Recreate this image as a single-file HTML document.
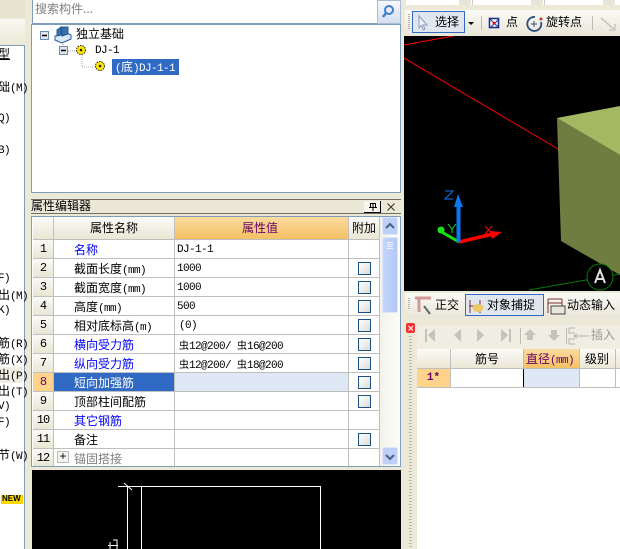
<!DOCTYPE html>
<html><head><meta charset="utf-8"><style>
html,body{margin:0;padding:0}
body{width:620px;height:549px;overflow:hidden;position:relative;background:#ece9d8;font:12px/14px "WenQuanYi Zen Hei","Noto Sans CJK SC",sans-serif;color:#000}
div,span.a{position:absolute;box-sizing:border-box}
.t{position:absolute;white-space:nowrap;line-height:14px;font-size:12px}
.m{font:11px/14px "Liberation Mono",monospace;letter-spacing:-.6px}
.b{color:#0000ff}
.h{background:linear-gradient(#fbfaf6,#e9e6d4)}
.n{position:absolute;left:33px;width:20px;height:18px;background:linear-gradient(#fbfaf6,#e9e6d4);text-align:center;font:12px/18px "Liberation Mono",monospace;letter-spacing:-1px}
.l{position:absolute;left:33px;width:347px;height:1px;background:#bfbfbf}
.c{position:absolute;left:358px;width:13px;height:13px;border:1px solid #1c5180;background:linear-gradient(135deg,#fff,#dcdcd6)}
.s{background:#fff;border:1px solid #7f9db9}
</style></head><body>

<!-- left strip -->
<div style="left:0;top:0;width:25px;height:18px;background:#e6e3d0"></div>
<div style="left:0;top:19px;width:25px;height:26px;background:linear-gradient(#faf9f2,#ece9d8)"></div>
<div style="left:0;top:45px;width:25px;height:504px;background:#fff;border-top:1px solid #7f9db9;border-right:1px solid #7f9db9"></div>
<span class="t" style="left:-2px;top:47px;text-decoration:underline">型</span>
<span class="t" style="left:-2px;top:80px">础<span class="m">(M)</span></span>
<span class="t m" style="left:-2px;top:112px">Q)</span>
<span class="t m" style="left:-2px;top:144px">B)</span>
<span class="t m" style="left:-2px;top:272px">F)</span>
<span class="t" style="left:-2px;top:288px">出<span class="m">(M)</span></span>
<span class="t m" style="left:-2px;top:304px">K)</span>
<span class="t" style="left:-2px;top:336px">筋<span class="m">(R)</span></span>
<span class="t" style="left:-2px;top:352px">筋<span class="m">(X)</span></span>
<div style="left:0;top:367px;width:23px;height:16px;background:#f0eee2"></div>
<span class="t" style="left:-2px;top:368px">出<span class="m">(P)</span></span>
<span class="t" style="left:-2px;top:384px">出<span class="m">(T)</span></span>
<span class="t m" style="left:-2px;top:400px">V)</span>
<span class="t m" style="left:-2px;top:416px">F)</span>
<span class="t" style="left:-2px;top:448px">节<span class="m">(W)</span></span>
<div style="left:1px;top:495px;width:22px;height:9px;background:#ffd800"></div>
<span class="t" style="left:2px;top:492px;font:bold 8px/14px 'Liberation Sans',sans-serif">NEW</span>

<!-- search -->
<div class="s" style="left:32px;top:-2px;width:345px;height:26px;border-right:0"></div>
<span class="t" style="left:35px;top:2px;color:#808080">搜索构件...</span>
<div style="left:377px;top:0;width:24px;height:24px;background:linear-gradient(#f8f8fc,#d5deef);border:1px solid #a9bcd6"></div>
<svg style="position:absolute;left:380px;top:3px" width="17" height="17"><circle cx="9" cy="7" r="4" fill="none" stroke="#3a7fd0" stroke-width="2"/><path d="M6 10L3 14" stroke="#3a7fd0" stroke-width="2.4"/></svg>

<!-- tree -->
<div class="s" style="left:31px;top:24px;width:370px;height:169px"></div>
<svg style="position:absolute;left:32px;top:25px" width="160" height="60">
<path d="M31 17V21M36 26H43M50 32V42H62" stroke="#a8a8a8" stroke-dasharray="1 1" fill="none"/>
<rect x="8.500" y="6.500" width="8" height="8" fill="#dfe6ee" stroke="#6d8bab"/><path d="M10 10.500H15" stroke="#000" stroke-width="1.500"/>
<rect x="27.500" y="21.500" width="8" height="8" fill="#dfe6ee" stroke="#6d8bab"/><path d="M29 25.500H34" stroke="#000" stroke-width="1.500"/>
<path d="M23 11L35 8L39 10V14L30 18L23 15Z" fill="#dbe8f6" stroke="#1f5c9c"/><path d="M25 5L29 2V10L25 11ZM30 2H36V9L30 11Z" fill="#3d6fa8" stroke="#1f5c9c"/>
<g fill="#ffe600" stroke="#222" stroke-dasharray="1.500 1"><circle cx="49" cy="25" r="4.500"/><circle cx="68" cy="41" r="4.500"/></g>
<circle cx="49" cy="25" r="1.300" fill="#222"/><circle cx="68" cy="41" r="1.300" fill="#222"/>
</svg>
<span class="t" style="left:76px;top:27px">独立基础</span>
<span class="t m" style="left:95px;top:44px">DJ-1</span>
<div style="left:112px;top:59px;width:67px;height:16px;background:#316ac5"></div>
<span class="t" style="left:115px;top:60px;color:#fff"><span class="m">(</span>底<span class="m">)DJ-1-1</span></span>

<!-- attr editor title -->
<div style="left:31px;top:199px;width:370px;height:15px;background:#ebe8d8;border-top:1px solid #6e6e62;border-bottom:1px solid #6e6e62"></div>
<span class="t" style="left:31px;top:199px">属性编辑器</span>
<div style="left:364px;top:201px;width:17px;height:12px;background:#f7f6ee;border-right:1px solid #000;border-bottom:1px solid #000"></div>
<svg style="position:absolute;left:367px;top:202px" width="12" height="10"><path d="M3.500 1.500H8.500V5.500H3.500ZM6 1.500V5.500M2 5.500H10M6 5.500V9" stroke="#000" fill="none"/></svg>
<svg style="position:absolute;left:386px;top:202px" width="11" height="11"><path d="M1.500 1.500L8.500 8.500M8.500 1.500L1.500 8.500" stroke="#333" fill="none"/></svg>

<!-- table -->
<div style="left:31px;top:216px;width:370px;height:251px;background:#fff;border:1px solid #7f9db9"></div>
<div class="h" style="left:33px;top:217px;width:20px;height:23px"></div>
<div class="h" style="left:54px;top:217px;width:120px;height:23px"></div>
<div style="left:175px;top:217px;width:173px;height:23px;background:linear-gradient(#fbdb9e,#f4c062)"></div>
<div class="h" style="left:349px;top:217px;width:30px;height:23px"></div>
<span class="t" style="left:90px;top:221px">属性名称</span>
<span class="t" style="left:242px;top:221px;color:#660066">属性值</span>
<span class="t" style="left:352px;top:221px">附加</span>

<div style="left:175px;top:373px;width:173px;height:18px;background:#dfe8f5"></div>
<div style="left:54px;top:373px;width:120px;height:18px;background:#316ac5"></div>

<div class="l" style="top:258px"></div><div class="l" style="top:277px"></div><div class="l" style="top:296px"></div>
<div class="l" style="top:315px"></div><div class="l" style="top:334px"></div><div class="l" style="top:353px"></div>
<div class="l" style="top:372px"></div><div class="l" style="top:391px"></div><div class="l" style="top:410px"></div>
<div class="l" style="top:429px"></div><div class="l" style="top:448px"></div>
<div style="left:53px;top:217px;width:1px;height:249px;background:#bfbfbf"></div>
<div style="left:174px;top:217px;width:1px;height:249px;background:#bfbfbf"></div>
<div style="left:348px;top:217px;width:1px;height:249px;background:#bfbfbf"></div>
<div style="left:379px;top:217px;width:1px;height:249px;background:#bfbfbf"></div>
<div style="left:33px;top:239px;width:347px;height:1px;background:#bfbfbf"></div>

<div class="n" style="top:240px">1</div><div class="n" style="top:259px">2</div><div class="n" style="top:278px">3</div>
<div class="n" style="top:297px">4</div><div class="n" style="top:316px">5</div><div class="n" style="top:335px">6</div>
<div class="n" style="top:354px">7</div><div class="n" style="top:373px;background:#ffd38a;color:#660066">8</div><div class="n" style="top:392px">9</div>
<div class="n" style="top:411px">10</div><div class="n" style="top:430px">11</div><div class="n" style="top:449px;height:17px">12</div>

<span class="t b" style="left:74px;top:243px">名称</span>
<span class="t" style="left:74px;top:262px">截面长度<span class="m">(mm)</span></span>
<span class="t" style="left:74px;top:281px">截面宽度<span class="m">(mm)</span></span>
<span class="t" style="left:74px;top:300px">高度<span class="m">(mm)</span></span>
<span class="t" style="left:74px;top:319px">相对底标高<span class="m">(m)</span></span>
<span class="t b" style="left:74px;top:338px">横向受力筋</span>
<span class="t b" style="left:74px;top:357px">纵向受力筋</span>
<span class="t" style="left:74px;top:376px;color:#fff">短向加强筋</span>
<span class="t" style="left:74px;top:395px">顶部柱间配筋</span>
<span class="t b" style="left:74px;top:414px">其它钢筋</span>
<span class="t" style="left:74px;top:433px">备注</span>
<span class="t" style="left:74px;top:452px;color:#808080">锚固搭接</span>
<div style="left:57px;top:451px;width:12px;height:12px;border:1px solid #bbb;background:#f4f4f0;font:12px/10px 'Liberation Mono',monospace;text-align:center">+</div>

<span class="t m" style="left:177px;top:243px">DJ-1-1</span>
<span class="t m" style="left:177px;top:262px">1000</span>
<span class="t m" style="left:177px;top:281px">1000</span>
<span class="t m" style="left:177px;top:300px">500</span>
<span class="t m" style="left:179px;top:319px">(0)</span>
<span class="t" style="left:179px;top:338px;font-size:10px">虫<span class="m">12@200/ </span>虫<span class="m">16@200</span></span>
<span class="t" style="left:179px;top:357px;font-size:10px">虫<span class="m">12@200/ </span>虫<span class="m">18@200</span></span>

<div class="c" style="top:262px"></div><div class="c" style="top:281px"></div><div class="c" style="top:300px"></div>
<div class="c" style="top:319px"></div><div class="c" style="top:338px"></div><div class="c" style="top:357px"></div>
<div class="c" style="top:376px"></div><div class="c" style="top:395px"></div><div class="c" style="top:433px"></div>

<!-- scrollbar -->
<div style="left:380px;top:217px;width:20px;height:249px;background:linear-gradient(90deg,#f3f2ea,#fdfdfa)"></div>
<div style="left:382px;top:217px;width:16px;height:18px;background:#bcd0f8;border:1px solid #dfe8fb;border-radius:2px"></div>
<div style="left:382px;top:237px;width:16px;height:76px;background:linear-gradient(90deg,#c5d6fb,#b2c8f6);border:1px solid #dfe8fb;border-radius:2px"></div>
<div style="left:382px;top:447px;width:16px;height:18px;background:#bcd0f8;border:1px solid #dfe8fb;border-radius:2px"></div>
<svg style="position:absolute;left:382px;top:217px" width="16" height="250">
<path d="M4 11L8 7L12 11" fill="none" stroke="#4d6185" stroke-width="2"/>
<path d="M4 238L8 242L12 238" fill="none" stroke="#4d6185" stroke-width="2"/>
<path d="M5 25.500H11M5 27.500H11M5 29.500H11M5 31.500H11" stroke="#eef3fd"/>
</svg>

<!-- preview -->
<div style="left:32px;top:470px;width:369px;height:79px;background:#000"></div>
<svg style="position:absolute;left:32px;top:470px" width="369" height="79">
<path d="M86 16.500H109.500M95.500 16.500V79M109.500 16.500H288.500V79M109.500 16.500V79M92 13L100 20" stroke="#fff" fill="none"/>
<path d="M76 75.500H86M78 72V79M81 70H85V79" stroke="#fff" fill="none"/>
</svg>

<!-- right side -->
<div style="left:406px;top:0;width:214px;height:5px;background:#fff"></div>
<div style="left:459px;top:0;width:12px;height:5px;background:#e8e6d8"></div>
<div style="left:531px;top:0;width:12px;height:5px;background:#e8e6d8"></div>
<div style="left:603px;top:0;width:12px;height:5px;background:#e8e6d8"></div>
<div style="left:472px;top:0;width:1px;height:5px;background:#ccc"></div><div style="left:544px;top:0;width:1px;height:5px;background:#ccc"></div>
<div style="left:405px;top:10px;width:215px;height:26px;background:linear-gradient(#fafaf5,#e9e6d8)"></div>
<div style="left:412px;top:11px;width:53px;height:22px;background:#dfe6ee;border:1px solid #316ac5"></div>
<svg style="position:absolute;left:405px;top:10px" width="215" height="26">
<path d="M4 4V20" stroke="#b5b5a8" stroke-dasharray="1 1" stroke-width="2"/>
<path d="M14 6V18L16.500 15.500L18.500 20L20 19L18 15H22Z" fill="#eef2f8" stroke="#8b9fbe"/>
<path d="M63 12H69L66 15Z" fill="#000"/>
<path d="M76.500 6V20M187.500 6V20" stroke="#bdbdb0"/>
<rect x="84.500" y="8.500" width="9" height="9" fill="#fff" stroke="#22318c" stroke-width="1.600"/><path d="M85 9L94 18M94 9L85 18" stroke="#22318c"/><circle cx="89" cy="13" r="1.300" fill="#e00"/>
<path d="M130 7A7 7 0 1 0 136 12" fill="none" stroke="#2c4e80" stroke-width="1.800"/><path d="M129 11V17M126 14H132" stroke="#2c4e80"/><circle cx="136" cy="9" r="1.500" fill="#c33"/>
<path d="M196 8L210 20M210 14V20H204" stroke="#c8c8bc" stroke-width="1.500" fill="none"/>
</svg>
<span class="t" style="left:435px;top:15px">选择</span>
<span class="t" style="left:506px;top:15px">点</span>
<span class="t" style="left:546px;top:15px">旋转点</span>

<!-- 3D view -->
<svg style="position:absolute;left:404px;top:36px" width="216" height="255" viewBox="404 36 216 255">
<rect x="404" y="36" width="216" height="255" fill="#000"/>
<path d="M404 45L453 36M404 58L558 149" stroke="#f00" stroke-width="1" fill="none"/>
<path d="M557 118L620 155V275L561 241Z" fill="#6f7d40"/>
<path d="M557 118L620 106V155Z" fill="#a3b860"/>
<path d="M529 290L620 274" stroke="#0a7a0a" fill="none"/>
<circle cx="600" cy="277" r="13" fill="#000" stroke="#0a7a0a"/>
<path d="M595 283L600 270L605 283M597 279H603" stroke="#e0e0e0" stroke-width="2" fill="none"/>
<path d="M459 242L440 231" stroke="#18e018" stroke-width="3"/><circle cx="441" cy="230" r="3.500" fill="#18e018"/>
<path d="M459 242L493 234" stroke="#f00" stroke-width="3.500"/><path d="M490 231L502 232L492 239Z" fill="#f00"/>
<path d="M458.500 242V205" stroke="#0a78f0" stroke-width="4"/><path d="M458 194L454 207H463Z" fill="#0a78f0"/>
<path d="M445 191H453L445 199H453" stroke="#0a78f0" fill="none"/>
<path d="M448 224L452 229L456 224M452 229V233" stroke="#18e018" fill="none"/>
<path d="M485 226L492 234M492 226L485 234" stroke="#f00" fill="none"/>
</svg>

<!-- second toolbar -->
<div style="left:405px;top:293px;width:215px;height:25px;background:linear-gradient(#fafaf5,#e9e6d8)"></div>
<div style="left:465px;top:294px;width:79px;height:22px;background:#dfe6ee;border:1px solid #316ac5"></div>
<svg style="position:absolute;left:405px;top:293px" width="215" height="25">
<path d="M4 5V17" stroke="#b5b5a8" stroke-dasharray="1 1" stroke-width="2"/>
<path d="M10 5H26M14 5V19" stroke="#cf9a9a" stroke-width="3" fill="none"/><path d="M19 13L25 21" stroke="#667" stroke-width="2"/>
<path d="M65 7V20M75 7V20" stroke="#7b3030"/><path d="M64 13H77" stroke="#7b3030"/><ellipse cx="73" cy="15" rx="5.500" ry="4" fill="#eec96a"/>
<path d="M143 6H157M143 10H157M143 6V20M157 6V20" stroke="#7a3030" fill="none"/><rect x="146" y="13" width="14" height="8" fill="#e8e6d8" stroke="#444"/>
</svg>
<span class="t" style="left:435px;top:298px">正交</span>
<span class="t" style="left:487px;top:298px">对象捕捉</span>
<span class="t" style="left:567px;top:298px">动态输入</span>

<!-- bottom right panel -->
<div style="left:406px;top:323px;width:9px;height:10px;background:#e33;border-radius:2px"></div>
<svg style="position:absolute;left:406px;top:323px" width="10" height="10"><path d="M2.500 3L7 7.500M7 3L2.500 7.500" stroke="#fff" fill="none"/></svg>
<div style="left:409px;top:336px;width:3px;height:213px;background:repeating-linear-gradient(#b9b8aa 0 1px,#ece9d8 1px 3px)"></div>
<div style="left:417px;top:325px;width:203px;height:224px;background:#f0eee2"></div>
<svg style="position:absolute;left:417px;top:325px" width="203" height="24">
<g fill="#c4c4bc"><path d="M8 4H10V17H8ZM11 10L18 4V17Z"/><path d="M37 10L44 4V17Z"/><path d="M60 4L67 10L60 17Z"/><path d="M84 4L91 10L84 17ZM92 4H94V17H92Z"/>
<path d="M107 10L113 4L119 10H116V15H110V10Z"/><path d="M131 10L137 16L143 10H140V5H134V10Z"/></g>
<path d="M103.500 3V19M149.500 3V19" stroke="#bdbdb0"/>
<path d="M158 3H152V8H158M158 14H152V19H158M158 11H172M160 9L157 11L160 13" stroke="#b5b5ae" fill="none"/>
</svg>
<span class="t" style="left:591px;top:328px;color:#9b9b94">插入</span>
<div style="left:417px;top:349px;width:203px;height:200px;background:#fff"></div>
<div class="h" style="left:417px;top:349px;width:33px;height:20px"></div>
<div class="h" style="left:451px;top:349px;width:72px;height:20px"></div>
<div style="left:524px;top:349px;width:55px;height:20px;background:linear-gradient(#fbdb9e,#f4c062)"></div>
<div class="h" style="left:580px;top:349px;width:35px;height:20px"></div>
<div class="h" style="left:616px;top:349px;width:4px;height:20px"></div>
<span class="t" style="left:475px;top:352px">筋号</span>
<span class="t" style="left:526px;top:352px;color:#660066">直径<span class="m">(mm)</span></span>
<span class="t" style="left:585px;top:352px">级别</span>
<div style="left:417px;top:369px;width:33px;height:18px;background:#ffd38a;color:#660066;text-align:center;font:bold 11px/18px 'Liberation Mono',monospace">1*</div>
<div style="left:524px;top:369px;width:55px;height:18px;background:#dfe8f5"></div>
<div style="left:523px;top:369px;width:1px;height:18px;background:#000"></div>
<div style="left:417px;top:387px;width:203px;height:1px;background:#bfbfbf"></div>
<div style="left:417px;top:368px;width:203px;height:1px;background:#bfbfbf"></div>
<div style="left:450px;top:349px;width:1px;height:38px;background:#bfbfbf"></div>
<div style="left:579px;top:349px;width:1px;height:38px;background:#bfbfbf"></div>
<div style="left:615px;top:349px;width:1px;height:38px;background:#bfbfbf"></div>
<div style="left:523px;top:349px;width:1px;height:20px;background:#bfbfbf"></div>
</body></html>
